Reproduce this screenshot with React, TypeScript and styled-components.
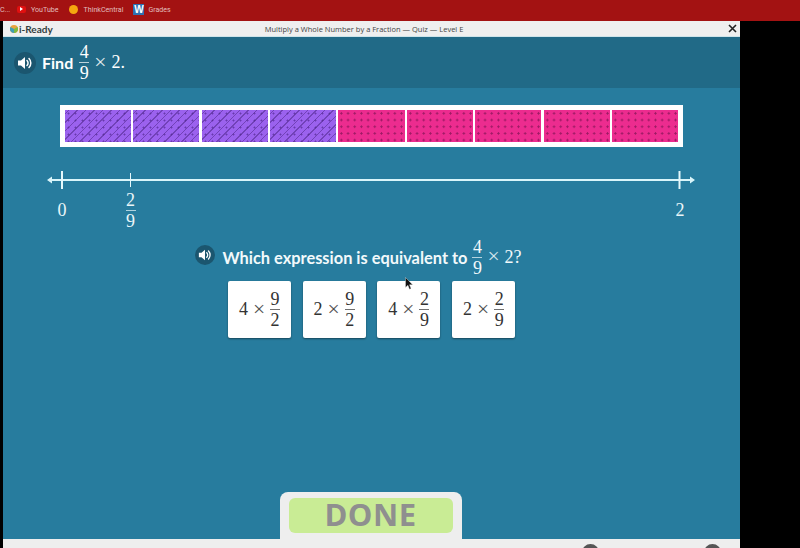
import React from "react";
import styled, { createGlobalStyle } from "styled-components";

const Global = createGlobalStyle`
  html, body {
    margin: 0;
    padding: 0;
    width: 800px;
    height: 548px;
    overflow: hidden;
    background: #000;
  }
`;

const Page = styled.div`
  width: 800px;
  height: 548px;
  display: flex;
  flex-direction: column;
  overflow: hidden;
  position: relative;
  background: #000;
  font-family: "Lato", "Liberation Sans", sans-serif;
`;

const Bookmarks = styled.div`
  height: 21px;
  flex: none;
  background: #a31212;
  display: flex;
  align-items: center;
  color: #e2bdbd;
  font-size: 7.1px;
  font-family: "Roboto", "Liberation Sans", sans-serif;
  padding-bottom: 3px;
  box-sizing: border-box;
`;

const Clipped = styled.span`
  width: 17px;
`;

const BookmarkLabel = styled.span<{ $gap: number }>`
  margin-left: ${({ $gap }) => $gap}px;
`;

const OrangeDot = styled.span`
  width: 9px;
  height: 9px;
  border-radius: 50%;
  background: #f5a70f;
  margin-left: 10px;
`;

const YouTubeIcon = styled.span`
  width: 9px;
  height: 7px;
  border-radius: 2px;
  background: #e01010;
  display: flex;
  align-items: center;
  justify-content: center;
  &::after {
    content: "";
    border-left: 3px solid #fff;
    border-top: 2px solid transparent;
    border-bottom: 2px solid transparent;
  }
`;

const WIcon = styled.span`
  width: 11px;
  height: 11px;
  margin-left: 10px;
  background: #2f6fb0;
  color: #fff;
  font: bold 10px/11px "Liberation Sans", sans-serif;
  text-align: center;
`;

const Window = styled.div`
  width: 737px;
  margin-left: 3px;
  flex: 1;
  min-height: 0;
  display: flex;
  flex-direction: column;
`;

const TitleBar = styled.div`
  height: 16px;
  flex: none;
  background: #efefef;
  border-bottom: 1px solid #cfe4ea;
  box-sizing: border-box;
  display: grid;
  grid-template-columns: 80px 1fr 80px;
  align-items: center;
`;

const Logo = styled.div`
  display: flex;
  align-items: center;
  gap: 1px;
  margin-left: 7px;
  color: #33403f;
  font-size: 10px;
  font-weight: 700;
`;

const Title = styled.div`
  text-align: center;
  font-family: "Open Sans", "Liberation Sans", sans-serif;
  font-size: 7.5px;
  color: #444;
  padding-right: 15px;
`;

const Close = styled.svg`
  justify-self: end;
  margin-right: 3px;
  width: 9px;
  height: 9px;
`;

const Header = styled.div`
  height: 51px;
  flex: none;
  background: #216a87;
  display: flex;
  align-items: center;
  gap: 6px;
  padding-left: 11px;
  color: #fff;
  font-size: 16px;
  font-weight: 700;
  box-sizing: border-box;
`;

const Speaker = styled.span<{ $size: number; $lift: number }>`
  width: ${({ $size }) => $size}px;
  height: ${({ $size }) => $size}px;
  margin-bottom: ${({ $lift }) => $lift}px;
  flex: none;
  border-radius: 50%;
  background: #1b566f;
  display: flex;
  align-items: center;
  justify-content: center;
`;

const MathRun = styled.span`
  display: inline-flex;
  align-items: center;
  gap: 5px;
  font-family: "Liberation Serif", "Times New Roman", serif;
  font-weight: 400;
  font-size: 18px;
`;

const Times = styled.span`
  font-size: 1.2em;
  line-height: 1;
  opacity: 0.85;
`;

const FracBox = styled.span`
  display: inline-flex;
  flex-direction: column;
  align-items: center;
  line-height: 20px;
`;

const FracBar = styled.span`
  width: 10px;
  height: 1px;
  background: currentColor;
  opacity: 0.7;
`;

const Content = styled.div`
  flex: 1;
  min-height: 0;
  background: #277c9e;
  display: flex;
  flex-direction: column;
  align-items: center;
`;

const ModelBar = styled.div`
  margin-top: 17px;
  align-self: flex-start;
  margin-inline-start: 57px;
  width: 623px;
  height: 42px;
  flex: none;
  box-sizing: border-box;
  padding: 5px;
  background: #fff;
  display: grid;
  grid-template-columns: repeat(9, 1fr);
  column-gap: 2.25px;
`;

const Cell = styled.div<{ $shaded: boolean }>`
  background-color: ${({ $shaded }) => ($shaded ? "#9b62ee" : "#ec2c8f")};
  background-image: ${({ $shaded }) =>
    $shaded
      ? `repeating-linear-gradient(-45deg, rgba(80, 40, 140, 0.55) 0 1px, transparent 1px 6px),
         radial-gradient(circle, rgba(70, 30, 130, 0.6) 0.8px, transparent 1.2px)`
      : `radial-gradient(circle, rgba(130, 20, 85, 0.75) 0.9px, transparent 1.3px)`};
  background-size: ${({ $shaded }) =>
    $shaded ? "auto, 7px 7px" : "6.7px 6.7px"};
`;

const NumberLine = styled.svg`
  display: block;
  flex: none;
  align-self: flex-start;
  margin-top: 21px;
  margin-left: 41px;
  width: 654px;
  height: 24px;
`;

const TickLabels = styled.div`
  align-self: flex-start;
  flex: none;
  display: flex;
  height: 44px;
  margin-left: 39px;
  margin-top: -4px;
  color: #eaf6f9;
  font-family: "Liberation Serif", "Times New Roman", serif;
  font-size: 18px;
`;

const TickLabel = styled.div<{ $gap: number }>`
  width: 40px;
  height: 44px;
  margin-left: ${({ $gap }) => $gap}px;
  display: flex;
  align-items: center;
  justify-content: center;
`;

const Question = styled.div`
  display: flex;
  flex: none;
  align-items: center;
  margin-top: 4px;
  margin-bottom: 3px;
  margin-right: 26px;
  color: #f2f9fb;
  font-size: 16.4px;
  font-weight: 700;
  height: 42px;
`;

const QuestionText = styled.span`
  margin: 0 5px 0 7px;
`;

const Cards = styled.div`
  display: flex;
  flex: none;
  gap: 11.7px;
`;

const Card = styled.button`
  width: 63px;
  height: 57px;
  border: 0;
  padding: 0;
  border-radius: 2px;
  background: #fff;
  color: #333;
  box-shadow: 0 1px 2px rgba(0, 0, 0, 0.45);
  display: flex;
  align-items: center;
  justify-content: center;
`;

const DoneTab = styled.div`
  margin-top: auto;
  margin-right: 2px;
  width: 182px;
  height: 47px;
  flex: none;
  box-sizing: border-box;
  padding: 6px 9px 0;
  background: #eee;
  border-radius: 8px 8px 0 0;
`;

const DoneButton = styled.div`
  height: 35px;
  border-radius: 6px;
  background: #c9ec95;
  color: #8f8f8f;
  font-family: "Open Sans", "Liberation Sans", sans-serif;
  font-size: 31px;
  font-weight: 700;
  line-height: 33px;
  text-align: center;
  letter-spacing: 0.5px;
`;

const Footer = styled.div`
  height: 9px;
  flex: none;
  background: #eee;
  display: flex;
  justify-content: flex-end;
  gap: 105px;
  padding: 5px 19.5px 0 0;
  box-sizing: border-box;
  overflow: hidden;
`;

const FooterDot = styled.span`
  width: 17px;
  height: 17px;
  flex: none;
  border-radius: 50%;
  background: #555;
`;

const Pointer = styled.svg`
  position: absolute;
  left: 405px;
  top: 277px;
  width: 8px;
  height: 13px;
`;

function Frac({ top, bottom }: { top: string; bottom: string }) {
  return (
    <FracBox>
      <span>{top}</span>
      <FracBar />
      <span>{bottom}</span>
    </FracBox>
  );
}

function SpeakerButton({ size, lift = 0 }: { size: number; lift?: number }) {
  return (
    <Speaker $size={size} $lift={lift}>
      <svg width={size - 6} height={size - 6} viewBox="0 0 16 16">
        <path d="M1 5.5h3L8 2v12L4 10.5H1z" fill="#fff" />
        <path
          d="M10 5.5a3.5 3.5 0 0 1 0 5M12 3.5a6.5 6.5 0 0 1 0 9"
          fill="none"
          stroke="#fff"
          strokeWidth="1.5"
          strokeLinecap="round"
        />
      </svg>
    </Speaker>
  );
}

const cells = [true, true, true, true, false, false, false, false, false];

const answers = [
  { lead: "4", top: "9", bottom: "2" },
  { lead: "2", top: "9", bottom: "2" },
  { lead: "4", top: "2", bottom: "9" },
  { lead: "2", top: "2", bottom: "9" },
];

export default function App() {
  return (
    <Page>
      <Global />
      <Bookmarks>
        <Clipped>C...</Clipped>
        <YouTubeIcon />
        <BookmarkLabel $gap={5}>YouTube</BookmarkLabel>
        <OrangeDot />
        <BookmarkLabel $gap={6}>ThinkCentral</BookmarkLabel>
        <WIcon>W</WIcon>
        <BookmarkLabel $gap={4}>Grades</BookmarkLabel>
      </Bookmarks>
      <Window>
        <TitleBar>
          <Logo>
            <svg width="8" height="8" viewBox="0 0 8 8">
              <circle cx="4" cy="4" r="4" fill="#e8a33d" />
              <path d="M4 4V8A4 4 0 0 1 0.5 2z" fill="#3f9fb5" />
              <path d="M4 4V8A4 4 0 0 0 7.5 2z" fill="#7dbb42" />
            </svg>
            i-Ready
          </Logo>
          <Title>Multiply a Whole Number by a Fraction — Quiz — Level E</Title>
          <Close viewBox="0 0 9 9">
            <path d="M1 1l7 7M8 1L1 8" stroke="#222" strokeWidth="1.6" />
          </Close>
        </TitleBar>
        <Header>
          <SpeakerButton size={22} />
          <span>Find</span>
          <MathRun>
            <Frac top="4" bottom="9" />
            <Times>×</Times>
            <span>2.</span>
          </MathRun>
        </Header>
        <Content>
          <ModelBar>
            {cells.map((shaded, i) => (
              <Cell key={i} $shaded={shaded} />
            ))}
          </ModelBar>
          <NumberLine viewBox="0 0 654 24">
            <path d="M6 12H648" stroke="#d9f5fa" strokeWidth="2" />
            <path d="M3 12l5-3.5v7zM651 12l-5-3.5v7z" fill="#d9f5fa" />
            <path d="M18 3v18M635.5 3v18" stroke="#e6f8fb" strokeWidth="2" />
            <path d="M86.5 5v14" stroke="#e6f8fb" strokeWidth="1" />
          </NumberLine>
          <TickLabels>
            <TickLabel $gap={0}>0</TickLabel>
            <TickLabel $gap={28.5}>
              <Frac top="2" bottom="9" />
            </TickLabel>
            <TickLabel $gap={509.5}>2</TickLabel>
          </TickLabels>
          <Question>
            <SpeakerButton size={20} lift={4} />
            <QuestionText>Which expression is equivalent to</QuestionText>
            <MathRun>
              <Frac top="4" bottom="9" />
              <Times>×</Times>
              <span>2?</span>
            </MathRun>
          </Question>
          <Cards>
            {answers.map((a, i) => (
              <Card key={i}>
                <MathRun>
                  <span>{a.lead}</span>
                  <Times>×</Times>
                  <Frac top={a.top} bottom={a.bottom} />
                </MathRun>
              </Card>
            ))}
          </Cards>
          <DoneTab>
            <DoneButton>DONE</DoneButton>
          </DoneTab>
        </Content>
        <Footer>
          <FooterDot />
          <FooterDot />
        </Footer>
      </Window>
      <Pointer viewBox="0 0 8 13">
        <path d="M0.5 0.5v10l2.4-2.2 1.6 4 1.6-.7-1.6-3.8h3.2z" fill="#111" stroke="#eee" strokeWidth="0.4" />
      </Pointer>
    </Page>
  );
}
